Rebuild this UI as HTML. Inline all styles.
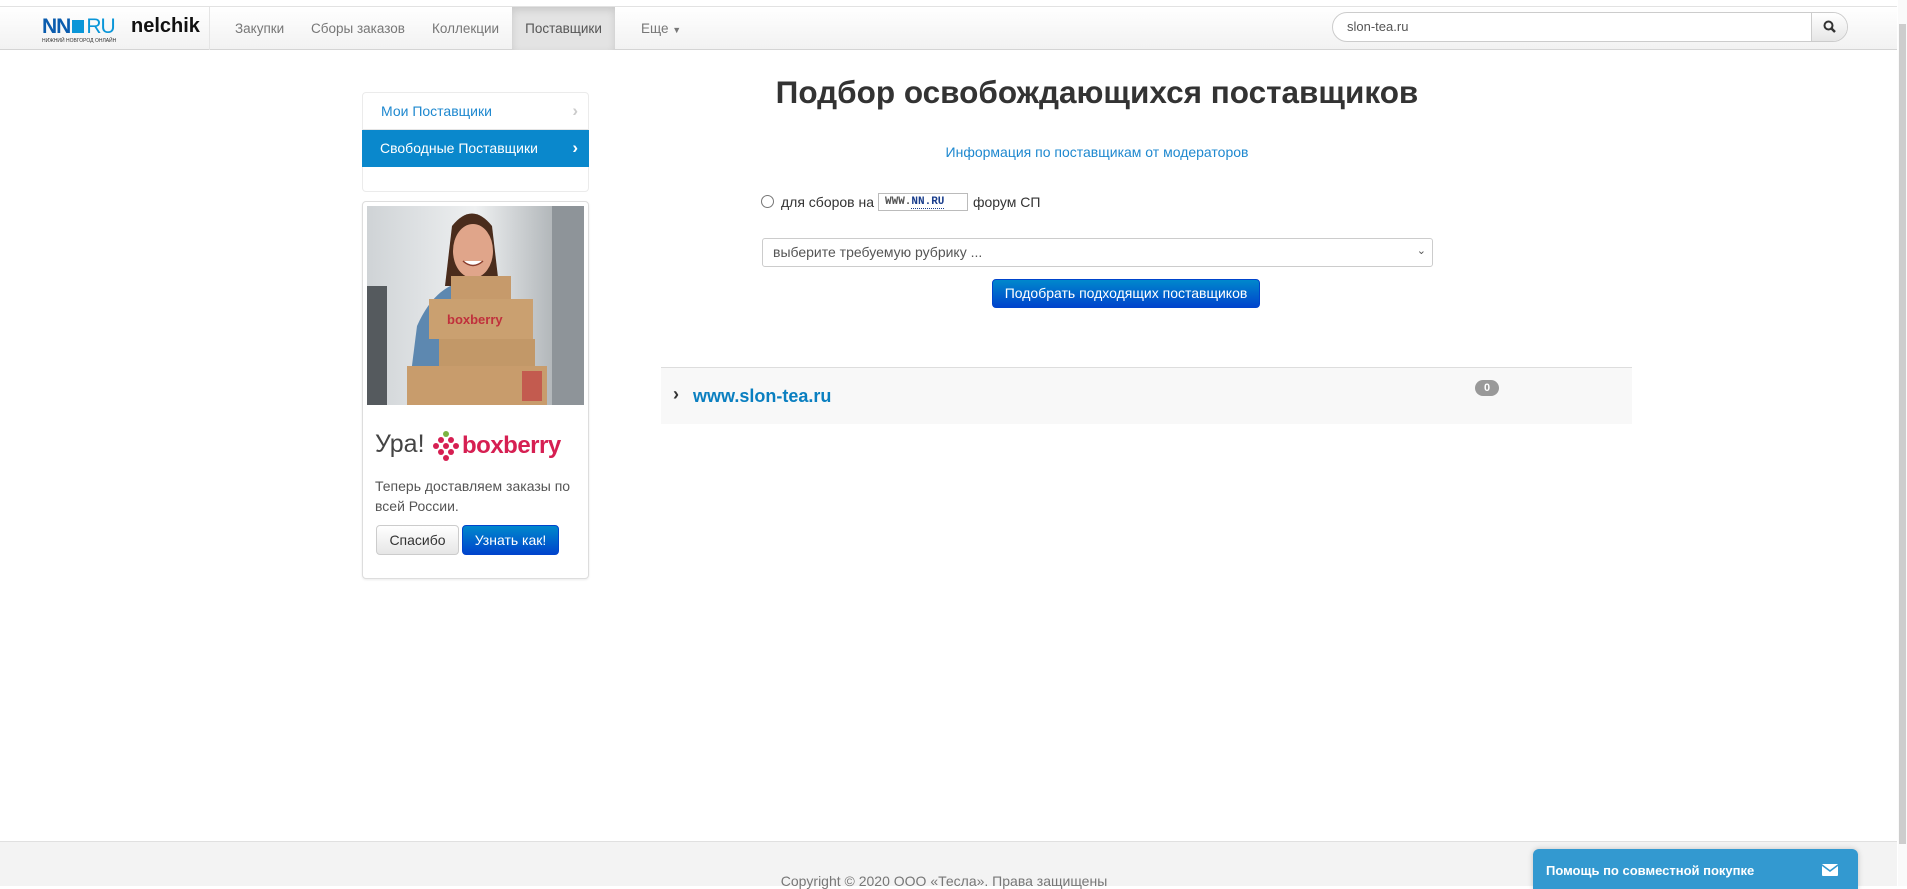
<!DOCTYPE html>
<html><head><meta charset="utf-8"><style>
*{box-sizing:border-box;margin:0;padding:0}
body{width:1907px;height:886px;overflow:hidden;background:#fff;font-family:"Liberation Sans",Arial,sans-serif;color:#333;position:relative}
.nav{position:absolute;left:0;top:6px;width:1897px;height:44px;background:linear-gradient(#fff,#f2f2f2);border-top:1px solid #e2e2e2;border-bottom:1px solid #d4d4d4}
.nav a{position:absolute;top:0;height:43px;line-height:43px;font-size:13.5px;color:#777;text-decoration:none}
.abs{position:absolute}
.side{position:absolute;left:362px;top:92px;width:227px;height:100px;border:1px solid #ebebeb;border-radius:4px;background:#fff}
.side div{height:37px;line-height:37px;padding-left:18px;font-size:14px;position:relative}
.ad{position:absolute;left:362px;top:201px;width:227px;height:378px;border:1px solid #ddd;border-radius:4px;background:#fff;box-shadow:0 1px 2px rgba(0,0,0,.08)}
.btn{position:absolute;border-radius:4px;font-size:14px;text-align:center}
</style></head><body>
<div class="nav">
  <div class="abs" style="left:42px;top:8px;font-weight:bold;font-size:21px;color:#0a5cae;letter-spacing:-1px">NN<span style="display:inline-block;width:12px;height:13px;background:#0a96d8;margin:0 2px"></span><span style="font-weight:normal;color:#0a96d8">RU</span></div>
  <div class="abs" style="left:42px;top:31px;font-size:5px;color:#333;letter-spacing:0">НИЖНИЙ НОВГОРОД ОНЛАЙН</div>
  <div class="abs" style="left:131px;top:8px;font-weight:bold;font-size:20px;color:#111">nelchik</div>
  <div class="abs" style="left:209px;top:0;width:1px;height:43px;background:#e5e5e5"></div>
  <a style="left:235px">Закупки</a>
  <a style="left:311px">Сборы заказов</a>
  <a style="left:432px">Коллекции</a>
  <a style="left:512px;width:103px;background:#e3e3e3;box-shadow:inset 0 3px 8px rgba(0,0,0,.12);text-align:center;color:#555">Поставщики</a>
  <a style="left:641px">Еще <span style="font-size:9px">▼</span></a>
  <div class="abs" style="left:1332px;top:5px;width:516px;height:30px;border:1px solid #ccc;border-radius:15px;background:#fff;overflow:hidden">
    <div class="abs" style="left:14px;top:6px;font-size:13px;color:#555">slon-tea.ru</div>
    <div class="abs" style="right:0;top:0;width:36px;height:28px;background:linear-gradient(#fff,#e6e6e6);border-left:1px solid #ccc"><svg width="36" height="28"><circle cx="16.5" cy="12.5" r="4" fill="none" stroke="#333" stroke-width="2"/><path d="M19.5 15.5l3.5 3.5" stroke="#333" stroke-width="2.5"/></svg></div>
  </div>
</div>
<div class="abs" style="left:1898px;top:0;width:9px;height:886px;background:#fafafa"></div>
<div class="abs" style="left:1899px;top:24px;width:7px;height:820px;background:#cdcdcd"></div>

<div class="side">
  <div style="color:#1e88cf;border-bottom:1px solid #e5e5e5">Мои Поставщики<span class="abs" style="right:10px;top:-1px;color:#ccc;font-weight:bold;font-size:17px">›</span></div>
  <div style="color:#fff;background:#0a88cc;margin:0 -1px">Свободные Поставщики<span class="abs" style="right:11px;top:-1px;font-weight:bold;font-size:17px">›</span></div>
</div>
<div class="ad">
  <svg class="abs" style="left:4px;top:4px" width="217" height="199" viewBox="0 0 217 199">
    <defs><linearGradient id="bg" x1="0" x2="1"><stop offset="0" stop-color="#cfd3d6"/><stop offset=".5" stop-color="#eef0f1"/><stop offset="1" stop-color="#9aa0a4"/></linearGradient></defs>
    <rect width="217" height="199" fill="url(#bg)"/>
    <rect x="0" y="80" width="20" height="119" fill="#555a5e"/>
    <rect x="185" y="0" width="32" height="199" fill="#8e9499"/>
    <path d="M40 199 L50 120 Q70 75 105 75 Q140 75 160 120 L175 199Z" fill="#5d88b0"/>
    <path d="M85 20 Q105 -5 125 20 L132 80 L78 80Z" fill="#4a2c1c"/>
    <ellipse cx="106" cy="45" rx="20" ry="27" fill="#e0a58a"/>
    <path d="M96 55 Q106 64 116 55" fill="#fff" stroke="#8a3d2c" stroke-width="1.5"/>
    <rect x="84" y="70" width="60" height="25" fill="#c69a6b"/>
    <rect x="62" y="93" width="104" height="40" fill="#caa070"/>
    <text x="80" y="118" font-family="Liberation Sans" font-size="13" font-weight="bold" fill="#c0303c">boxberry</text>
    <rect x="72" y="133" width="96" height="30" fill="#c29868"/>
    <rect x="40" y="160" width="140" height="39" fill="#c89c6c"/>
    <rect x="155" y="165" width="20" height="30" fill="#c0303c" opacity=".6"/>
  </svg>
  <div class="abs" style="left:12px;top:228px;font-size:25px;color:#444">Ура!</div>
  <svg class="abs" style="left:70px;top:229px" width="26" height="30"><g fill="#d61f52"><circle cx="13" cy="3" r="3" fill="#7cb342"/><circle cx="8" cy="9" r="3"/><circle cx="18" cy="9" r="3"/><circle cx="3" cy="15" r="3"/><circle cx="13" cy="15" r="3"/><circle cx="23" cy="15" r="3"/><circle cx="8" cy="21" r="3"/><circle cx="18" cy="21" r="3"/><circle cx="13" cy="27" r="3"/></g></svg>
  <div class="abs" style="left:99px;top:230px;font-size:24px;font-weight:bold;color:#d61f52;letter-spacing:-.5px">boxberry</div>
  <div class="abs" style="left:12px;top:274px;font-size:14px;line-height:20px;color:#555;width:210px">Теперь доставляем заказы по всей России.</div>
  <div class="btn" style="left:13px;top:323px;width:83px;height:30px;line-height:28px;border:1px solid #ccc;background:linear-gradient(#fff,#e6e6e6);color:#333">Спасибо</div>
  <div class="btn" style="left:99px;top:323px;width:97px;height:30px;line-height:28px;border:1px solid #04c;background:linear-gradient(#08c,#04c);color:#fff">Узнать как!</div>
</div>

<div class="abs" style="left:660px;width:874px;top:74px;text-align:center;font-size:31.5px;font-weight:bold;color:#333">Подбор освобождающихся поставщиков</div>
<div class="abs" style="left:660px;width:874px;top:144px;text-align:center;font-size:14px;color:#1e88cf">Информация по поставщикам от модераторов</div>
<div class="abs" style="left:761px;top:195px;width:13px;height:13px;border:1px solid #777;border-radius:50%"></div>
<div class="abs" style="left:781px;top:194px;font-size:14px;color:#333">для сборов на</div>
<div class="abs" style="left:878px;top:193px;width:90px;height:18px;border:1px solid #bbb;font-size:11px;font-weight:bold;line-height:16px;padding-left:6px;color:#555;font-family:'Liberation Mono',monospace">WWW.<span style="color:#1a3e8c;border-bottom:1px dotted #1a3e8c">NN.RU</span></div>
<div class="abs" style="left:973px;top:194px;font-size:14px;color:#333">форум СП</div>
<div class="abs" style="left:762px;top:238px;width:671px;height:29px;border:1px solid #ccc;border-radius:3px;font-size:14px;line-height:27px;padding-left:10px;color:#555">выберите требуемую рубрику ...<span class="abs" style="right:6px;top:-1px;font-size:11px">&#x2304;</span></div>
<div class="btn" style="left:992px;top:279px;width:268px;height:29px;line-height:27px;border:1px solid #04c;background:linear-gradient(#08c,#04c);color:#fff">Подобрать подходящих поставщиков</div>

<div class="abs" style="left:661px;top:367px;width:971px;height:57px;background:#f8f8f8;border-top:1px solid #ddd"></div>
<div class="abs" style="left:673px;top:384px;font-size:18px;font-weight:bold;color:#333">›</div>
<div class="abs" style="left:693px;top:386px;font-size:18px;font-weight:bold;color:#0a7fc0">www.slon-tea.ru</div>
<div class="abs" style="left:1475px;top:380px;width:24px;height:16px;border-radius:8px;background:#999;color:#fff;font-size:11px;font-weight:bold;text-align:center;line-height:16px">0</div>

<div class="abs" style="left:0;top:841px;width:1897px;height:45px;background:#f3f3f3;border-top:1px solid #e0e0e0"></div>
<div class="abs" style="left:0;width:1888px;top:873px;text-align:center;font-size:14px;color:#777">Copyright © 2020 ООО «Тесла». Права защищены</div>
<div class="abs" style="left:1533px;top:849px;width:325px;height:40px;background:#3399d0;border-radius:6px 6px 0 0;box-shadow:0 0 6px rgba(0,0,0,.2)"></div>
<div class="abs" style="left:1546px;top:863px;font-size:13px;font-weight:bold;color:#fff">Помощь по совместной покупке</div>
<svg class="abs" style="left:1822px;top:864px" width="16" height="12"><rect width="16" height="12" rx="1" fill="#fff"/><path d="M0 1l8 6 8-6" fill="none" stroke="#3399d0" stroke-width="1.5"/></svg>
</body></html>
